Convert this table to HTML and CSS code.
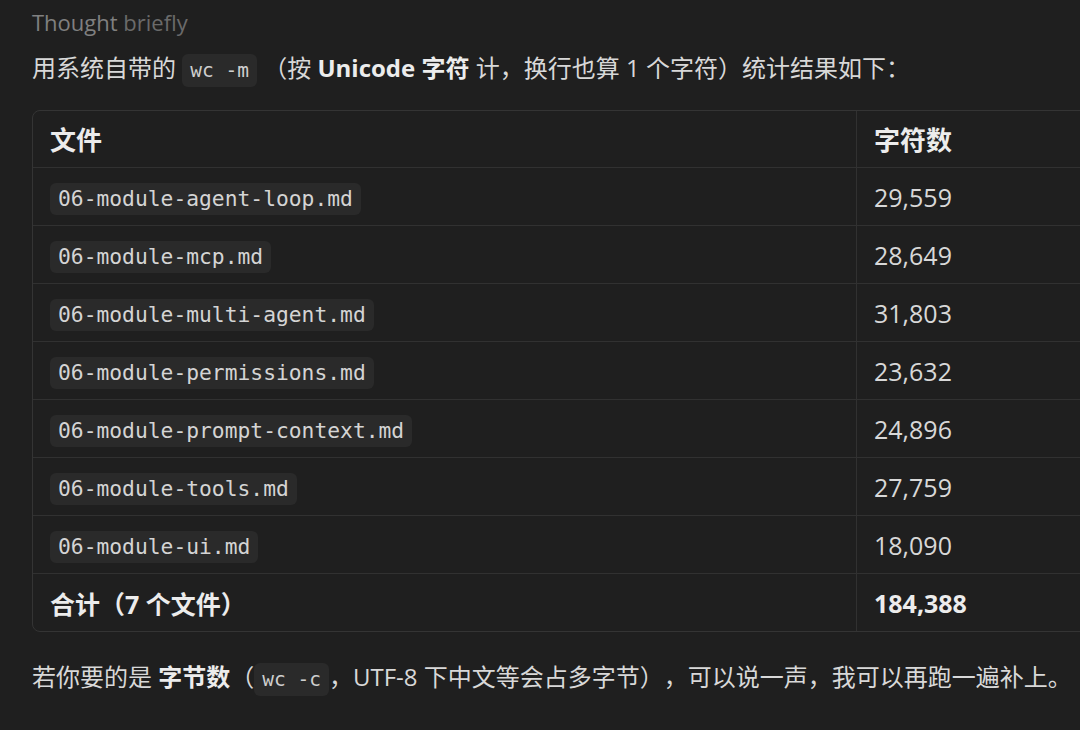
FILE: index.html
```html
<!DOCTYPE html>
<html lang="zh-CN">
<head>
<meta charset="utf-8">
<link rel="stylesheet" href="styles.css">
</head>
<body>
<main class="msg">
  <div class="thought"><span class="t1">Thought</span> <span class="t2">briefly</span></div>
  <p class="para">用系统自带的 <code>wc -m</code> （按 <strong>Unicode 字符</strong> 计，换行也算 1 个字符）统计结果如下：</p>
  <div class="table-wrap">
    <table class="tbl">
      <thead>
        <tr><th class="c1">文件</th><th class="c2">字符数</th></tr>
      </thead>
      <tbody>
        <tr><td class="c1"><code>06-module-agent-loop.md</code></td><td class="c2">29,559</td></tr>
        <tr><td class="c1"><code>06-module-mcp.md</code></td><td class="c2">28,649</td></tr>
        <tr><td class="c1"><code>06-module-multi-agent.md</code></td><td class="c2">31,803</td></tr>
        <tr><td class="c1"><code>06-module-permissions.md</code></td><td class="c2">23,632</td></tr>
        <tr><td class="c1"><code>06-module-prompt-context.md</code></td><td class="c2">24,896</td></tr>
        <tr><td class="c1"><code>06-module-tools.md</code></td><td class="c2">27,759</td></tr>
        <tr><td class="c1"><code>06-module-ui.md</code></td><td class="c2">18,090</td></tr>
        <tr class="total"><td class="c1"><strong>合计（7 个文件）</strong></td><td class="c2"><strong>184,388</strong></td></tr>
      </tbody>
    </table>
  </div>
  <p class="para last">若你要的是 <strong>字节数</strong>（<code>wc -c</code>，UTF-8 下中文等会占多字节），可以说一声，我可以再跑一遍补上。</p>
</main>
</body>
</html>
```

FILE: styles.css
```css
html, body {
  margin: 0;
  padding: 0;
  background: #1f1f1f;
  overflow: hidden;
}
body {
  width: 1080px;
  height: 730px;
  font-family: "Segoe UI", "Open Sans", "Noto Sans", "Noto Sans CJK SC", sans-serif;
  color: #d8d8d8;
  text-spacing-trim: space-all;
}
.msg {
  padding: 8px 0 0 32px;
}
.thought {
  font-size: 22px;
  line-height: 28px;
  height: 28px;
}
.t1 { color: #808080; }
.t2 { color: #6a6a6a; }
.para {
  margin: 14px 0 0 0;
  font-size: 24px;
  line-height: 36px;
  white-space: nowrap;
}
.para strong {
  font-weight: 700;
  color: #ececec;
}
code {
  font-family: "DejaVu Sans Mono", "Liberation Mono", monospace;
  background: #2a2a2a;
  border-radius: 6px;
}
.para code {
  font-size: 19.5px;
  padding: 5px 8px;
  color: #cfcfcf;
}
.table-wrap {
  margin-top: 21px;
  width: 1120px;
}
.tbl {
  width: 1100px;
  border-collapse: separate;
  border-spacing: 0;
  border: 1px solid #343434;
  border-radius: 8px;
  font-size: 25px;
  color: #d8d8d8;
}
.tbl th, .tbl td {
  text-align: left;
  padding: 0 17px;
  border-bottom: 1px solid #313131;
}
.tbl th {
  height: 56px;
  font-weight: 700;
  font-size: 26px;
  color: #ececec;
}
.tbl td {
  height: 57px;
}
.tbl .c1 {
  width: 789px;
  border-right: 1px solid #313131;
}
.tbl tr.total td {
  border-bottom: none;
}
.tbl tr.total strong {
  font-weight: 700;
  color: #ececec;
}
.tbl code {
  display: inline-block;
  font-size: 21.3px;
  line-height: 32px;
  padding: 0 8px;
  color: #d4d4d4;
  vertical-align: middle;
}
.para.last {
  margin-top: 27px;
}
```
